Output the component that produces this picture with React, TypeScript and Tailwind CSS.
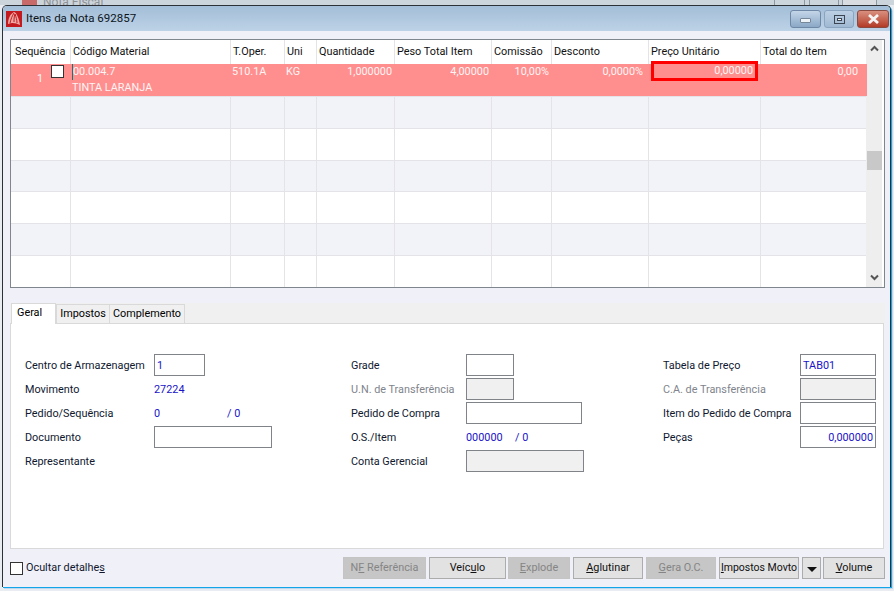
const columns = [
  { label: "Sequência", w: "w-[60px]", pl: "pl-[4px]" },
  { label: "Código Material", w: "w-[160px]", pl: "pl-[2px]" },
  { label: "T.Oper.", w: "w-[54px]", pl: "pl-[2px]" },
  { label: "Uni", w: "w-[32px]", pl: "pl-[2px]" },
  { label: "Quantidade", w: "w-[78px]", pl: "pl-[2px]" },
  { label: "Peso Total Item", w: "w-[97px]", pl: "pl-[2px]" },
  { label: "Comissão", w: "w-[60px]", pl: "pl-[2px]" },
  { label: "Desconto", w: "w-[97px]", pl: "pl-[2px]" },
  { label: "Preço Unitário", w: "w-[112px]", pl: "pl-[2px]" },
  { label: "Total do Item", w: "w-[106px]", pl: "pl-[2px]" },
];

const rowBgs = ["bg-[#f2f3f8]", "bg-white", "bg-[#f2f3f8]", "bg-white", "bg-[#f2f3f8]", "bg-white"];

function Chevron({ up }: { up?: boolean }) {
  return (
    <svg width="9" height="7" viewBox="0 0 9 7" className={up ? "" : "rotate-180"}>
      <path d="M1 5.5 L4.5 2 L8 5.5" fill="none" stroke="#555" strokeWidth="2" />
    </svg>
  );
}

function Grid() {
  return (
    <div className="mx-[6px] mt-[8px] flex h-[249px] w-[875px] border border-[#7f868e] bg-white">
      <div className="flex w-[856px] flex-col">
        <div className="flex h-[24px] items-center bg-white">
          {columns.map((c) => (
            <div
              key={c.label}
              className={`${c.w} ${c.pl} flex h-full items-center border-r border-[#e4e4e8] text-[#111]`}
            >
              {c.label}
            </div>
          ))}
        </div>
        <div className="relative flex h-[32px] bg-[#ff8f8f] text-[#fff4f4]">
          <div className="flex w-[60px] items-start pt-[1px]">
            <span className="mt-[6px] w-[32px] text-right">1</span>
            <span className="ml-[8px] h-[13px] w-[13px] border border-[#333] bg-white" />
          </div>
          <div className="w-[160px] pl-[1px] leading-[15px]">
            <div className="h-[16px] border-l border-[#16766f]">00.004.7</div>
            <div>TINTA LARANJA</div>
          </div>
          <div className="w-[54px] pl-[1px]">510.1A</div>
          <div className="w-[32px] pl-[1px]">KG</div>
          <div className="w-[78px] pr-[3px] text-right">1,000000</div>
          <div className="w-[97px] pr-[3px] text-right">4,00000</div>
          <div className="w-[60px] pr-[3px] text-right">10,00%</div>
          <div className="w-[97px] pr-[6px] text-right">0,0000%</div>
          <div className="w-[112px]" />
          <div className="w-[106px] pr-[9px] text-right">0,00</div>
          <div className="absolute left-[640px] top-[-3px] flex h-[20px] w-[107px] items-center justify-end border-[3px] border-[#ff0000] pr-[2px]">
            0,00000
          </div>
        </div>
        {rowBgs.map((bg, i) => (
          <div key={i} className={`flex h-[32px] border-t border-[#e4e4e8] ${bg}`}>
            {columns.map((c) => (
              <div key={c.label} className={`${c.w} h-full border-r border-[#e4e4e8]`} />
            ))}
          </div>
        ))}
      </div>
      <div className="ml-[-1px] flex w-[16px] flex-col items-center bg-[#eeeeee] pb-[6px] pt-[5px]">
        <Chevron up />
        <div className="mt-[99px] h-[19px] w-[15px] bg-[#c8c8c8]" />
        <div className="mt-auto flex">
          <Chevron />
        </div>
      </div>
      <div className="w-[2px] bg-white" />
    </div>
  );
}

function Tabs() {
  return (
    <div className="mx-[6px] mt-[15px] flex h-[20px] w-[875px] items-end bg-[#f0f0f0]">
      <div className="z-10 mb-[-1px] ml-[1px] flex h-[21px] w-[45px] items-center justify-start rounded-t-[1px] border border-b-0 border-[#d9d9d9] bg-white pb-[1px] pl-[5px]">
        Geral
      </div>
      <div className="flex h-[19px] w-[54px] items-center justify-center border border-b-0 border-[#d9d9d9] bg-[#f0f0f0] pt-[1px]">
        Impostos
      </div>
      <div className="ml-[-1px] flex h-[19px] w-[76px] items-center justify-center border border-b-0 border-[#d9d9d9] bg-[#f0f0f0] pt-[1px]">
        Complemento
      </div>
    </div>
  );
}

function Box({ w, disabled, align, children }: { w: string; disabled?: boolean; align?: string; children?: string }) {
  return (
    <div
      className={`${w} ${align ?? ""} h-[22px] border border-[#808488] px-[2px] leading-[21px] text-[#1a14c8] ${
        disabled ? "bg-[#f0f0f0]" : "bg-white"
      }`}
    >
      {children}
    </div>
  );
}

function Row({ label, lw, muted, children }: { label: string; lw: string; muted?: boolean; children?: React.ReactNode }) {
  return (
    <div className="flex h-[24px] items-center">
      <div className={`${lw} pt-[2px] ${muted ? "text-[#80848c]" : "text-[#101830]"}`}>{label}</div>
      {children}
    </div>
  );
}

function Form() {
  return (
    <div className="mx-[6px] flex h-[226px] w-[874px] border border-[#d9d9d9] bg-white pt-[29px]">
      <div className="ml-[14px] w-[326px]">
        <Row label="Centro de Armazenagem" lw="w-[129px]">
          <Box w="w-[51px]">1</Box>
        </Row>
        <Row label="Movimento" lw="w-[129px]">
          <span className="pt-[2px] text-[#1a14c8]">27224</span>
        </Row>
        <Row label="Pedido/Sequência" lw="w-[129px]">
          <span className="w-[73px] pt-[2px] text-[#1a14c8]">0</span>
          <span className="pt-[2px] text-[#1a14c8]">/ 0</span>
        </Row>
        <Row label="Documento" lw="w-[129px]">
          <Box w="w-[118px]" />
        </Row>
        <Row label="Representante" lw="w-[129px]" />
      </div>
      <div className="w-[312px]">
        <Row label="Grade" lw="w-[115px]">
          <Box w="w-[48px]" />
        </Row>
        <Row label="U.N. de Transferência" lw="w-[115px]" muted>
          <Box w="w-[48px]" disabled />
        </Row>
        <Row label="Pedido de Compra" lw="w-[115px]">
          <Box w="w-[116px]" />
        </Row>
        <Row label="O.S./Item" lw="w-[115px]">
          <span className="w-[49px] pt-[2px] text-[#1a14c8]">000000</span>
          <span className="pt-[2px] text-[#1a14c8]">/ 0</span>
        </Row>
        <Row label="Conta Gerencial" lw="w-[115px]">
          <Box w="w-[118px]" disabled />
        </Row>
      </div>
      <div>
        <Row label="Tabela de Preço" lw="w-[137px]">
          <Box w="w-[76px]">TAB01</Box>
        </Row>
        <Row label="C.A. de Transferência" lw="w-[137px]" muted>
          <Box w="w-[76px]" disabled />
        </Row>
        <Row label="Item do Pedido de Compra" lw="w-[137px]">
          <Box w="w-[76px]" />
        </Row>
        <Row label="Peças" lw="w-[137px]">
          <Box w="w-[76px]" align="text-right">0,000000</Box>
        </Row>
      </div>
    </div>
  );
}

function Btn({ w, ml, disabled, children }: { w: string; ml: string; disabled?: boolean; children: React.ReactNode }) {
  return (
    <div
      className={`${w} ${ml} flex h-[22px] items-center justify-center whitespace-nowrap border ${
        disabled
          ? "border-[#c4c4c4] bg-[#c6c6c6] text-[#858585]"
          : "border-[#acacac] bg-[#e2e2e2] text-[#111]"
      }`}
    >
      <span>{children}</span>
    </div>
  );
}

function Footer() {
  return (
    <div className="mt-[8px] flex h-[22px] items-center pl-[6px]">
      <span className="h-[13px] w-[13px] border border-[#333] bg-white" />
      <span className="ml-[3px] w-[81px] whitespace-nowrap text-[#101830]">
        Ocultar detalhe<u>s</u>
      </span>
      <Btn w="w-[83px]" ml="ml-[236px]" disabled>
        N<u>F</u> Referência
      </Btn>
      <Btn w="w-[77px]" ml="ml-[3px]">
        Veíc<u>u</u>lo
      </Btn>
      <Btn w="w-[62px]" ml="ml-[2px]" disabled>
        <u>E</u>xplode
      </Btn>
      <Btn w="w-[70px]" ml="ml-[3px]">
        <u>A</u>glutinar
      </Btn>
      <Btn w="w-[70px]" ml="ml-[3px]" disabled>
        <u>G</u>era O.C.
      </Btn>
      <Btn w="w-[80px]" ml="ml-[3px]">
        <span className="text-[10.5px]">
          <u>I</u>mpostos Movto
        </span>
      </Btn>
      <Btn w="w-[19px]" ml="ml-[3px]">
        <svg width="10" height="5" viewBox="0 0 10 5" className="mt-[2px]">
          <path d="M0 0 H10 L5 5 Z" fill="#111" />
        </svg>
      </Btn>
      <Btn w="w-[62px]" ml="ml-[2px]">
        <u>V</u>olume
      </Btn>
    </div>
  );
}

function TitleBar() {
  return (
    <div className="flex h-[25px] items-center bg-gradient-to-b from-[#a3bed8] to-[#bdd2e6] pl-[3px] pr-[1px]">
      <svg width="16" height="16" viewBox="0 0 16 16">
        <rect width="16" height="16" fill="#c21a1f" />
        <path d="M2 13 C2 8 4 3 8 1 C11 2 13 8 14 14 C10 12 6 11 2 13 Z" fill="#f0a8a4" />
        <path d="M4 12 C5 8 6 5 8 2 M8 11 C8 8 8 6 9 3 M11 12 C11 9 10 6 9 3" stroke="#c21a1f" strokeWidth="1" fill="none" />
      </svg>
      <span className="ml-[4px] text-[11.5px] text-[#0c1420]">Itens da Nota 692857</span>
      <div className="ml-auto flex items-start self-start pt-[4px]">
        <div className="flex h-[18px] w-[31px] items-center justify-center rounded-[3px] border border-[#6f88a6] bg-gradient-to-b from-[#c4d6e8] to-[#8ba8c6]">
          <span className="mt-[2px] h-[5px] w-[11px] rounded-[1px] border border-[#76879a] bg-[#eef3f8]" />
        </div>
        <div className="ml-[3px] flex h-[18px] w-[30px] items-center justify-center rounded-[3px] border border-[#8ba4bf] bg-gradient-to-b from-[#bcd0e4] to-[#a0b9d2]">
          <span className="flex h-[9px] w-[11px] items-center justify-center border border-[#3b4652]">
            <span className="h-[3px] w-[5px] border border-[#3b4652] bg-white" />
          </span>
        </div>
        <div className="ml-[3px] flex h-[18px] w-[32px] items-center justify-center rounded-[3px] border border-[#8a4a40] bg-gradient-to-b from-[#d98f7f] to-[#b23a26]">
          <svg width="13" height="10" viewBox="0 0 13 10">
            <path d="M2 1 L11 9 M11 1 L2 9" stroke="#f4f4f4" strokeWidth="2.8" />
          </svg>
        </div>
      </div>
    </div>
  );
}

export default function App() {
  return (
    <div className="relative h-[591px] w-[894px] overflow-hidden bg-[#e9edf2] font-['Roboto',sans-serif] text-[10.85px]">
      {/* window behind, only its top edge shows */}
      <div className="absolute left-0 top-0 flex h-[5px] w-[894px] items-start overflow-hidden bg-[#cdd5dc] pl-[22px] pr-[17px]">
        <span className="h-[5px] w-[15px] bg-[#c96a6a]" />
        <span className="ml-[6px] whitespace-nowrap text-[12px] leading-[5px] text-[#8e9296]">Nota Fiscal</span>
        <span className="ml-auto h-[5px] w-[31px] border-x border-[#8e98a2]" />
        <span className="ml-[4px] h-[5px] w-[30px] border-x border-[#8e98a2]" />
        <span className="ml-[3px] h-[5px] w-[35px] border-x border-[#8e98a2] bg-[#d9dde2]" />
      </div>
      <div className="relative ml-[2px] mt-[5px] h-[582px] w-[889px] overflow-hidden rounded-t-[5px] border-x border-t border-[#2c3138] bg-[#f0f1f8] shadow-[1px_1px_0_#12a5e8,2px_2px_0_#bcd7ef]">
        <TitleBar />
        <div className="px-[1px]">
          <Grid />
          <Tabs />
          <Form />
          <Footer />
        </div>
      </div>
    </div>
  );
}
